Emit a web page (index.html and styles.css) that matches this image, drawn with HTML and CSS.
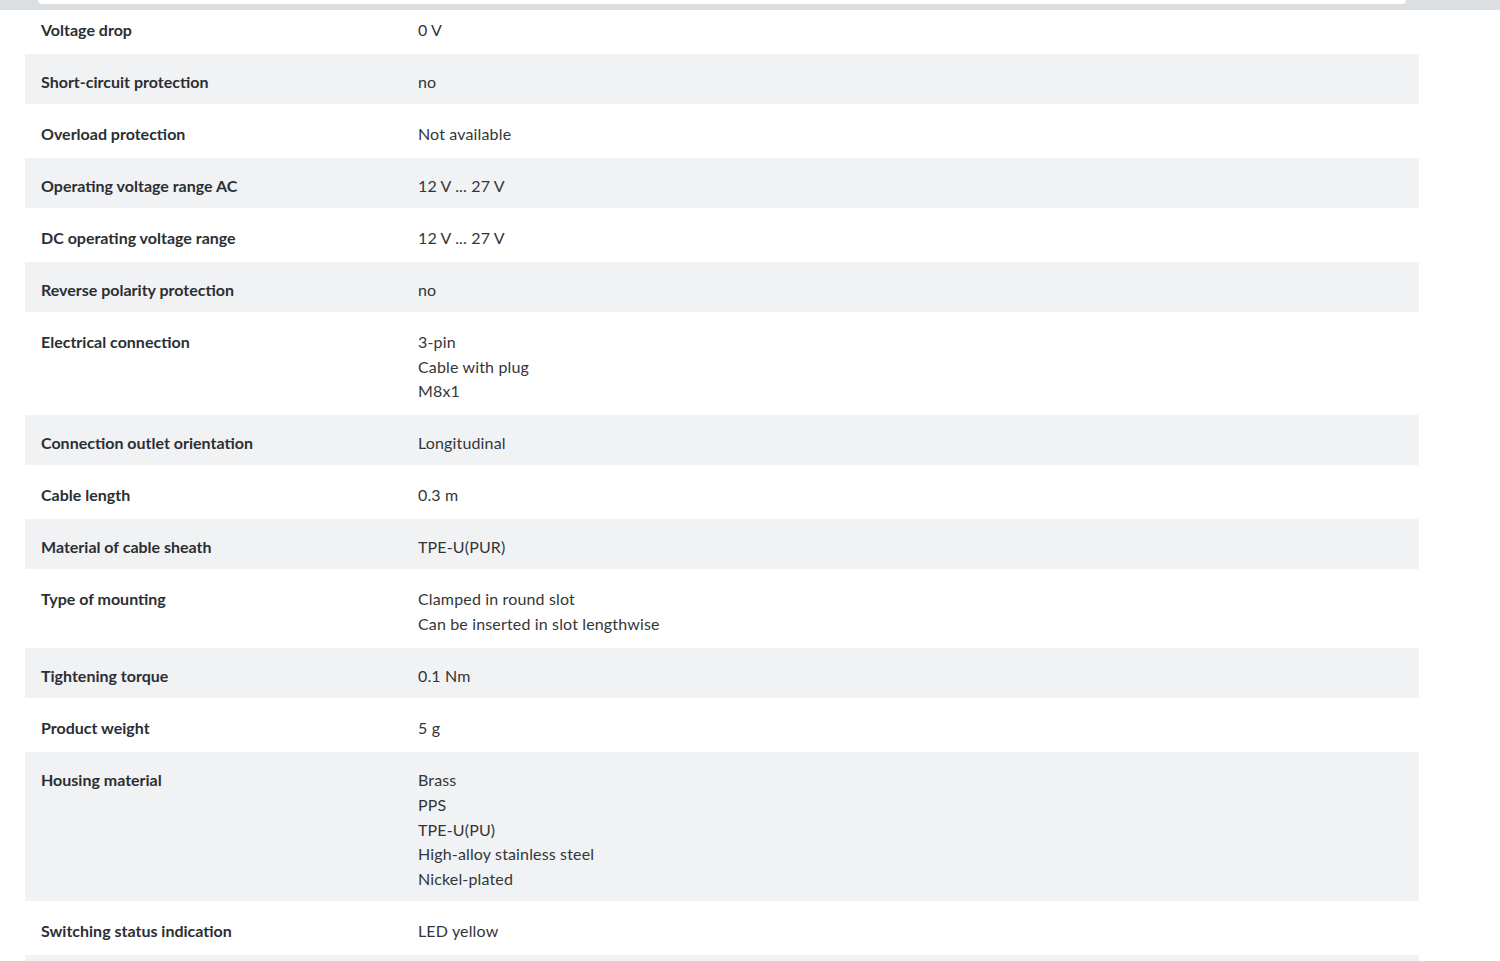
FILE: index.html
```html
<!DOCTYPE html>
<html lang="en">
<head>
<meta charset="utf-8">
<title>Technical data</title>
<link rel="stylesheet" href="styles.css">
</head>
<body>
<div class="topbar"><div class="topbar-inner"></div></div>
<div class="page">
  <div class="specs">
    <div class="row"><div class="label">Voltage drop</div><div class="value">0 V</div></div>
    <div class="row alt"><div class="label">Short-circuit protection</div><div class="value">no</div></div>
    <div class="row"><div class="label">Overload protection</div><div class="value">Not available</div></div>
    <div class="row alt"><div class="label">Operating voltage range AC</div><div class="value">12 V ... 27 V</div></div>
    <div class="row"><div class="label">DC operating voltage range</div><div class="value">12 V ... 27 V</div></div>
    <div class="row alt"><div class="label">Reverse polarity protection</div><div class="value">no</div></div>
    <div class="row"><div class="label">Electrical connection</div><div class="value">3-pin<br>Cable with plug<br>M8x1</div></div>
    <div class="row alt"><div class="label">Connection outlet orientation</div><div class="value">Longitudinal</div></div>
    <div class="row"><div class="label">Cable length</div><div class="value">0.3 m</div></div>
    <div class="row alt"><div class="label">Material of cable sheath</div><div class="value">TPE-U(PUR)</div></div>
    <div class="row"><div class="label">Type of mounting</div><div class="value">Clamped in round slot<br>Can be inserted in slot lengthwise</div></div>
    <div class="row alt"><div class="label">Tightening torque</div><div class="value">0.1 Nm</div></div>
    <div class="row"><div class="label">Product weight</div><div class="value">5 g</div></div>
    <div class="row alt"><div class="label">Housing material</div><div class="value">Brass<br>PPS<br>TPE-U(PU)<br>High-alloy stainless steel<br>Nickel-plated</div></div>
    <div class="row"><div class="label">Switching status indication</div><div class="value">LED yellow</div></div>
    <div class="row alt"><div class="label">Ambient temperature</div><div class="value">-20 °C ... 70 °C</div></div>
  </div>
</div>
</body>
</html>
```
FILE: styles.css
```css
html, body {
  margin: 0;
  padding: 0;
  background: #ffffff;
}
body {
  font-family: Lato, "Noto Sans", sans-serif;
  font-size: 16px;
  color: #333333;
  overflow: hidden;
}
.topbar {
  position: fixed;
  top: 0;
  left: 0;
  right: 0;
  height: 10px;
  background: #dcdfe1;
  z-index: 2;
}
.topbar-inner {
  margin-left: 38px;
  width: 1368px;
  height: 4px;
  background: #ffffff;
  border-radius: 0 0 4px 4px;
}
.page {
  padding: 1px 81px 0 25px;
}
.specs {
  display: flex;
  flex-direction: column;
}
.row {
  display: grid;
  grid-template-columns: 377px 1fr;
  border-top: 1px solid #ffffff;
  border-bottom: 1px solid #ffffff;
  padding: 16px 16px 9.3px 16px;
  line-height: 24.7px;
}
.row.alt {
  background: #f1f2f4;
}
.label {
  font-weight: 700;
  color: #2b2f33;
}
.value {
  color: #333639;
  letter-spacing: 0.15px;
}
```
